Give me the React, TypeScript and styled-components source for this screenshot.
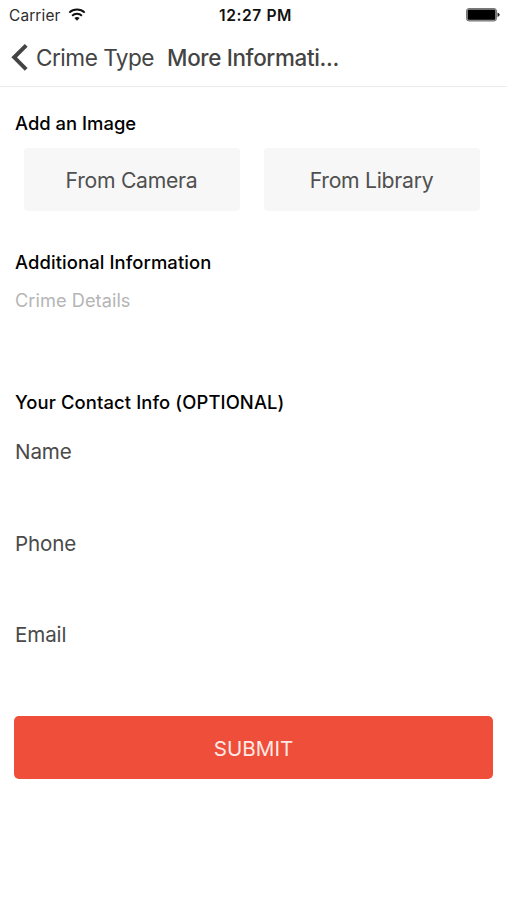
import React from 'react';
import styled, { createGlobalStyle } from 'styled-components';

const Global = createGlobalStyle`
  *{box-sizing:border-box}
  body{margin:0;background:#fff;font-family:Inter,"Liberation Sans",sans-serif;color:#111}
  button{font-family:inherit}
`;
const Screen = styled.main`width:507px;height:900px;background:#fff;overflow:hidden;`;
const StatusBar = styled.div`
  height:30px;display:grid;grid-template-columns:1fr auto 1fr;align-items:center;padding:0 7px 0 9px;
`;
const Carrier = styled.div`display:flex;align-items:center;gap:7px;font-size:15.4px;letter-spacing:.15px;color:#2c2c2c;`;
const Wifi = styled.svg`margin-top:-2px;`;
const Time = styled.div`font-size:15.6px;font-weight:600;letter-spacing:.58px;white-space:nowrap;margin-left:2px;`;
const Battery = styled.svg`justify-self:end;`;
const Nav = styled.header`
  height:57px;border-bottom:1px solid #ebebeb;display:flex;align-items:center;padding:0 0 1px 11px;color:#444;
`;
const Back = styled.a`display:flex;align-items:center;gap:8px;font-size:22.6px;letter-spacing:-.5px;white-space:nowrap;`;
const Chevron = styled.svg`margin-top:-2px;`;
const Title = styled.h1`margin:0 0 0 13px;font-size:22.4px;font-weight:500;letter-spacing:-.33px;white-space:nowrap;`;
const Body = styled.div`padding:25px 14px 0 15px;`;
const Heading = styled.h2<{ $spacing: number }>`
  margin:0;font-size:18.4px;line-height:22px;height:24px;font-weight:500;color:#000;white-space:nowrap;
  letter-spacing:${p => p.$spacing}px;
`;
const Buttons = styled.div`display:flex;gap:24px;padding:12px 0 0 9px;margin-bottom:40px;`;
const PickButton = styled.button`
  width:216px;height:63px;border:0;border-radius:4px;background:#f7f7f7;color:#505050;font-size:21.2px;letter-spacing:-.27px;padding:0 1px 0 0;
`;
const Details = styled.div`height:103px;margin:13px 0 0;font-size:18.2px;letter-spacing:.05px;line-height:24px;color:#b5b5b5;`;
const Fields = styled.div`padding-top:23px;`;
const Field = styled.label`display:block;height:91.5px;font-size:20.6px;letter-spacing:-.12px;line-height:28px;color:#4a4a4a;`;
const Submit = styled.button`
  display:block;width:479px;height:63.5px;margin:3px 0 0 -1px;border:0;border-radius:5px;background:#ee4e3a;color:#ffe9e4;font-size:20.6px;padding:2px 0 0;
`;

export default function App() {
  return (
    <Screen>
      <Global />
      <StatusBar>
        <Carrier><span>Carrier</span>
          <Wifi width="18" height="13" viewBox="0 0 18 13" fill="none" stroke="#111" strokeWidth="1.9">
            <path d="M1.3 4.6a11.2 11.2 0 0 1 15.4 0M4.1 7.7a7.2 7.2 0 0 1 9.8 0" />
            <path d="M6.4 10.1a4.2 4.2 0 0 1 5.2 0L9 12.8z" fill="#111" stroke="none" />
          </Wifi>
        </Carrier>
        <Time>12:27 PM</Time>
        <Battery width="34" height="14" viewBox="0 0 34 14">
          <rect x=".5" y=".5" width="30" height="12.5" rx="2.5" fill="#999" stroke="#777" />
          <rect x="1.8" y="1.8" width="27.4" height="10" rx="1" />
          <path d="M31.5 4.5q2.2.8 2.2 2.3t-2.2 2.3z" fill="#222" />
        </Battery>
      </StatusBar>
      <Nav>
        <Back>
          <Chevron width="17" height="28" viewBox="0 0 17 28" fill="none" stroke="#444" strokeWidth="4"><path d="M15.2 2.3 3.2 14.3l12 12" /></Chevron>
          <span>Crime Type</span>
        </Back>
        <Title>More Informati...</Title>
      </Nav>
      <Body>
        <Heading $spacing={0.02}>Add an Image</Heading>
        <Buttons><PickButton>From Camera</PickButton><PickButton>From Library</PickButton></Buttons>
        <Heading $spacing={0.1}>Additional Information</Heading>
        <Details>Crime Details</Details>
        <Heading $spacing={0.12}>Your Contact Info (OPTIONAL)</Heading>
        <Fields>
          <Field>Name</Field><Field>Phone</Field><Field>Email</Field>
        </Fields>
        <Submit>SUBMIT</Submit>
      </Body>
    </Screen>
  );
}
